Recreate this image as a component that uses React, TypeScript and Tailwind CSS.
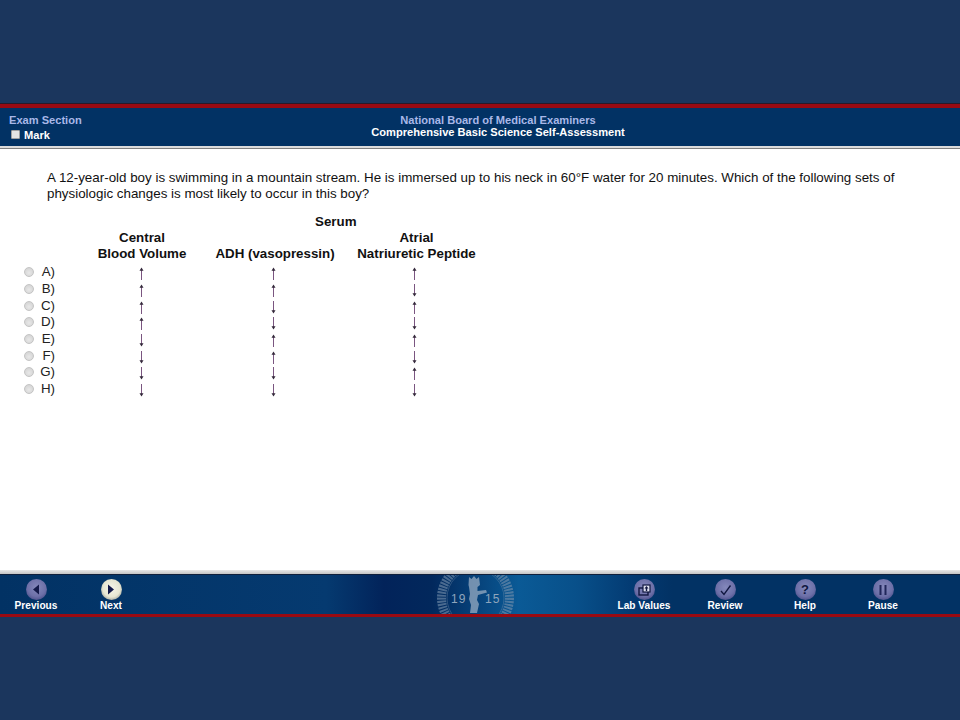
import React from "react";

const rows: [string, number, number, number][] = [
  ["A)", 1, 1, 1],
  ["B)", 1, 1, 0],
  ["C)", 1, 0, 1],
  ["D)", 1, 0, 0],
  ["E)", 0, 1, 1],
  ["F)", 0, 1, 0],
  ["G)", 0, 0, 1],
  ["H)", 0, 0, 0],
];

function Arrow({ up }: { up: number }) {
  return (
    <svg width="7" height="13" viewBox="0 0 7 13" className="mt-[3px] block">
      {up ? (
        <>
          <path d="M3.5 2V13" stroke="#7a5580" strokeWidth="1" fill="none" />
          <path d="M3.5 0.5L5.5 3.8H1.5Z" fill="#33283a" />
        </>
      ) : (
        <>
          <path d="M3.5 0V11" stroke="#7a5580" strokeWidth="1" fill="none" />
          <path d="M3.5 12.5L5.5 9.2H1.5Z" fill="#33283a" />
        </>
      )}
    </svg>
  );
}

function NavButton({
  label,
  className,
  light,
  children,
}: {
  label: string;
  className: string;
  light?: boolean;
  children: React.ReactNode;
}) {
  return (
    <div className={`flex w-[60px] flex-col items-center ${className}`}>
      <div
        className={`flex h-[21px] w-[21px] items-center justify-center rounded-full ${
          light
            ? "bg-[radial-gradient(circle_at_50%_45%,#f6f6ea_0%,#e6e6d2_55%,#8f9390_85%,#3d4a6c_100%)]"
            : "bg-[radial-gradient(circle_at_50%_40%,#8488bb_0%,#6d70a8_55%,#474a86_85%,#2a2d66_100%)]"
        }`}
      >
        {children}
      </div>
      <span className="text-[10.13px] leading-[12px] font-bold text-white">{label}</span>
    </div>
  );
}

export default function App() {
  return (
    <div className="flex h-[720px] w-[960px] flex-col overflow-hidden bg-[#1b365d] font-['Liberation_Sans',Arial,sans-serif]">
      <div className="h-[103px] shrink-0" />
      <div className="h-[5px] shrink-0 border-t border-[#2a1a2a] bg-[#9a0a12]" />
      <header className="relative h-[38px] shrink-0 bg-[#023264]">
        <div className="pt-[6px] pl-[9px]">
          <div className="text-[11.1px] leading-[13px] font-bold text-[#a9b8e8]">Exam Section</div>
          <div className="flex items-center pt-[2px] pl-[2px]">
            <span className="mb-[3px] h-[9px] w-[9px] rounded-[1px] border border-[#a0a0a0] bg-[#e4e4e4]" />
            <span className="ml-[4px] text-[11.1px] leading-[13px] font-bold text-white">Mark</span>
          </div>
        </div>
        <div className="absolute top-[6px] left-[0] w-[996px] text-center">
          <div className="text-[11.1px] leading-[12px] font-bold text-[#a9b8e8]">National Board of Medical Examiners</div>
          <div className="text-[11.1px] leading-[13px] font-bold text-white">Comprehensive Basic Science Self-Assessment</div>
        </div>
      </header>
      <div className="h-[2px] shrink-0 bg-[#dcdcdc]" />
      <div className="h-[1px] shrink-0 bg-[#808080]" />
      <main className="h-[421px] shrink-0 bg-white text-[#111]">
        <p className="w-[905px] pt-[21px] pl-[47px] text-[13.36px] leading-[16px]">
          A 12-year-old boy is swimming in a mountain stream. He is immersed up to his neck in 60°F water for 20
          minutes. Which of the following sets of physiologic changes is most likely to occur in this boy?
        </p>
        <div className="mt-[12px] text-[13.33px] font-bold leading-[16px]">
          <div className="pl-[315px]">Serum</div>
          <div className="flex">
            <div className="w-[92px]" />
            <div className="w-[100px] text-center">
              Central
              <br />
              Blood Volume
            </div>
            <div className="w-[23px]" />
            <div className="w-[120px] text-center">
              <br />
              ADH (vasopressin)
            </div>
            <div className="w-[22px]" />
            <div className="w-[119px] text-center">
              Atrial
              <br />
              Natriuretic Peptide
            </div>
          </div>
        </div>
        <div className="mt-[2px] text-[13.33px]">
          {rows.map(([label, a, b, c]) => (
            <div key={label} className="flex h-[16.7px] items-center">
              <span className="ml-[24px] h-[10px] w-[10px] rounded-full border border-[#c4c4c4] bg-[radial-gradient(circle_at_50%_60%,#e8e8e8_0%,#cfcfcf_100%)]" />
              <span className="w-[21px] text-right text-[#222]">{label}</span>
              <span className="ml-[83px] w-[7px]">
                <Arrow up={a} />
              </span>
              <span className="ml-[125px] w-[7px]">
                <Arrow up={b} />
              </span>
              <span className="ml-[134px] w-[7px]">
                <Arrow up={c} />
              </span>
            </div>
          ))}
        </div>
      </main>
      <div className="h-[4px] shrink-0 bg-[linear-gradient(180deg,#e8e8e8,#c4c4c4)]" />
      <div className="h-[1px] shrink-0 bg-[#10203c]" />
      <footer className="relative flex h-[39px] shrink-0 items-start bg-[linear-gradient(90deg,#023264_0%,#053a70_34%,#02235a_40%,#02285c_45%,#0a5a96_54%,#08508a_60%,#033a72_66%,#023264_70%,#023264_100%)] pt-[4px]">
        <NavButton label="Previous" className="ml-[6px]">
          <svg width="8" height="11" viewBox="0 0 8 11">
            <path d="M7 0.5V10.5L1 5.5Z" fill="#141a4a" />
          </svg>
        </NavButton>
        <NavButton label="Next" className="ml-[15px]" light>
          <svg width="8" height="11" viewBox="0 0 8 11">
            <path d="M1 0.5V10.5L7 5.5Z" fill="#141a4a" />
          </svg>
        </NavButton>
        <svg width="84" height="39" viewBox="0 0 84 39" className="absolute top-0 left-[433px]">
          <circle cx="42.5" cy="23" r="34" fill="none" stroke="#7a93ad" strokeWidth="9" strokeDasharray="2 1" opacity="0.6" />
          <circle cx="42.5" cy="23" r="28.5" fill="none" stroke="#7a93ad" strokeWidth="1" opacity="0.35" />
          <path d="M36 2L38.5 4L41 1L43.5 4L46 2L47 10L44.5 12V16L53 15L54 17.5L45 20L44 25L46 29L44 38H37L38 30L36 24L37 19L36 12L35.5 10Z" fill="#a3b4c7" opacity="0.7" />
          <text x="18" y="28" fill="#8fa5bc" fontSize="12" fontFamily="Liberation Sans" letterSpacing="1">19</text>
          <text x="52" y="28" fill="#8fa5bc" fontSize="12" fontFamily="Liberation Sans" letterSpacing="1">15</text>
        </svg>
        <div className="flex-1" />
        <NavButton label="Lab Values" className="">
          <svg width="13" height="12" viewBox="0 0 13 12">
            <rect x="1" y="4" width="9" height="7" fill="none" stroke="#10163f" strokeWidth="1.4" />
            <rect x="5" y="1" width="7" height="7" fill="#dfe0f0" stroke="#10163f" strokeWidth="1.2" />
            <path d="M8.5 2L10.5 4.5H9.2V7H7.8V4.5H6.5Z" fill="#10163f" />
          </svg>
        </NavButton>
        <NavButton label="Review" className="ml-[21px]">
          <svg width="13" height="12" viewBox="0 0 13 12">
            <path d="M2 7L5 10.5L11.5 1.5" fill="none" stroke="#10163f" strokeWidth="1.3" />
          </svg>
        </NavButton>
        <NavButton label="Help" className="ml-[20px]">
          <span className="text-[13px] leading-none font-bold text-[#10163f]">?</span>
        </NavButton>
        <NavButton label="Pause" className="ml-[18px] mr-[47px]">
          <svg width="9" height="10" viewBox="0 0 9 10">
            <path d="M1.5 0V10M6.5 0V10" stroke="#20265a" strokeWidth="2" />
          </svg>
        </NavButton>
      </footer>
      <div className="h-[3px] shrink-0 bg-[#9a0a12]" />
    </div>
  );
}
